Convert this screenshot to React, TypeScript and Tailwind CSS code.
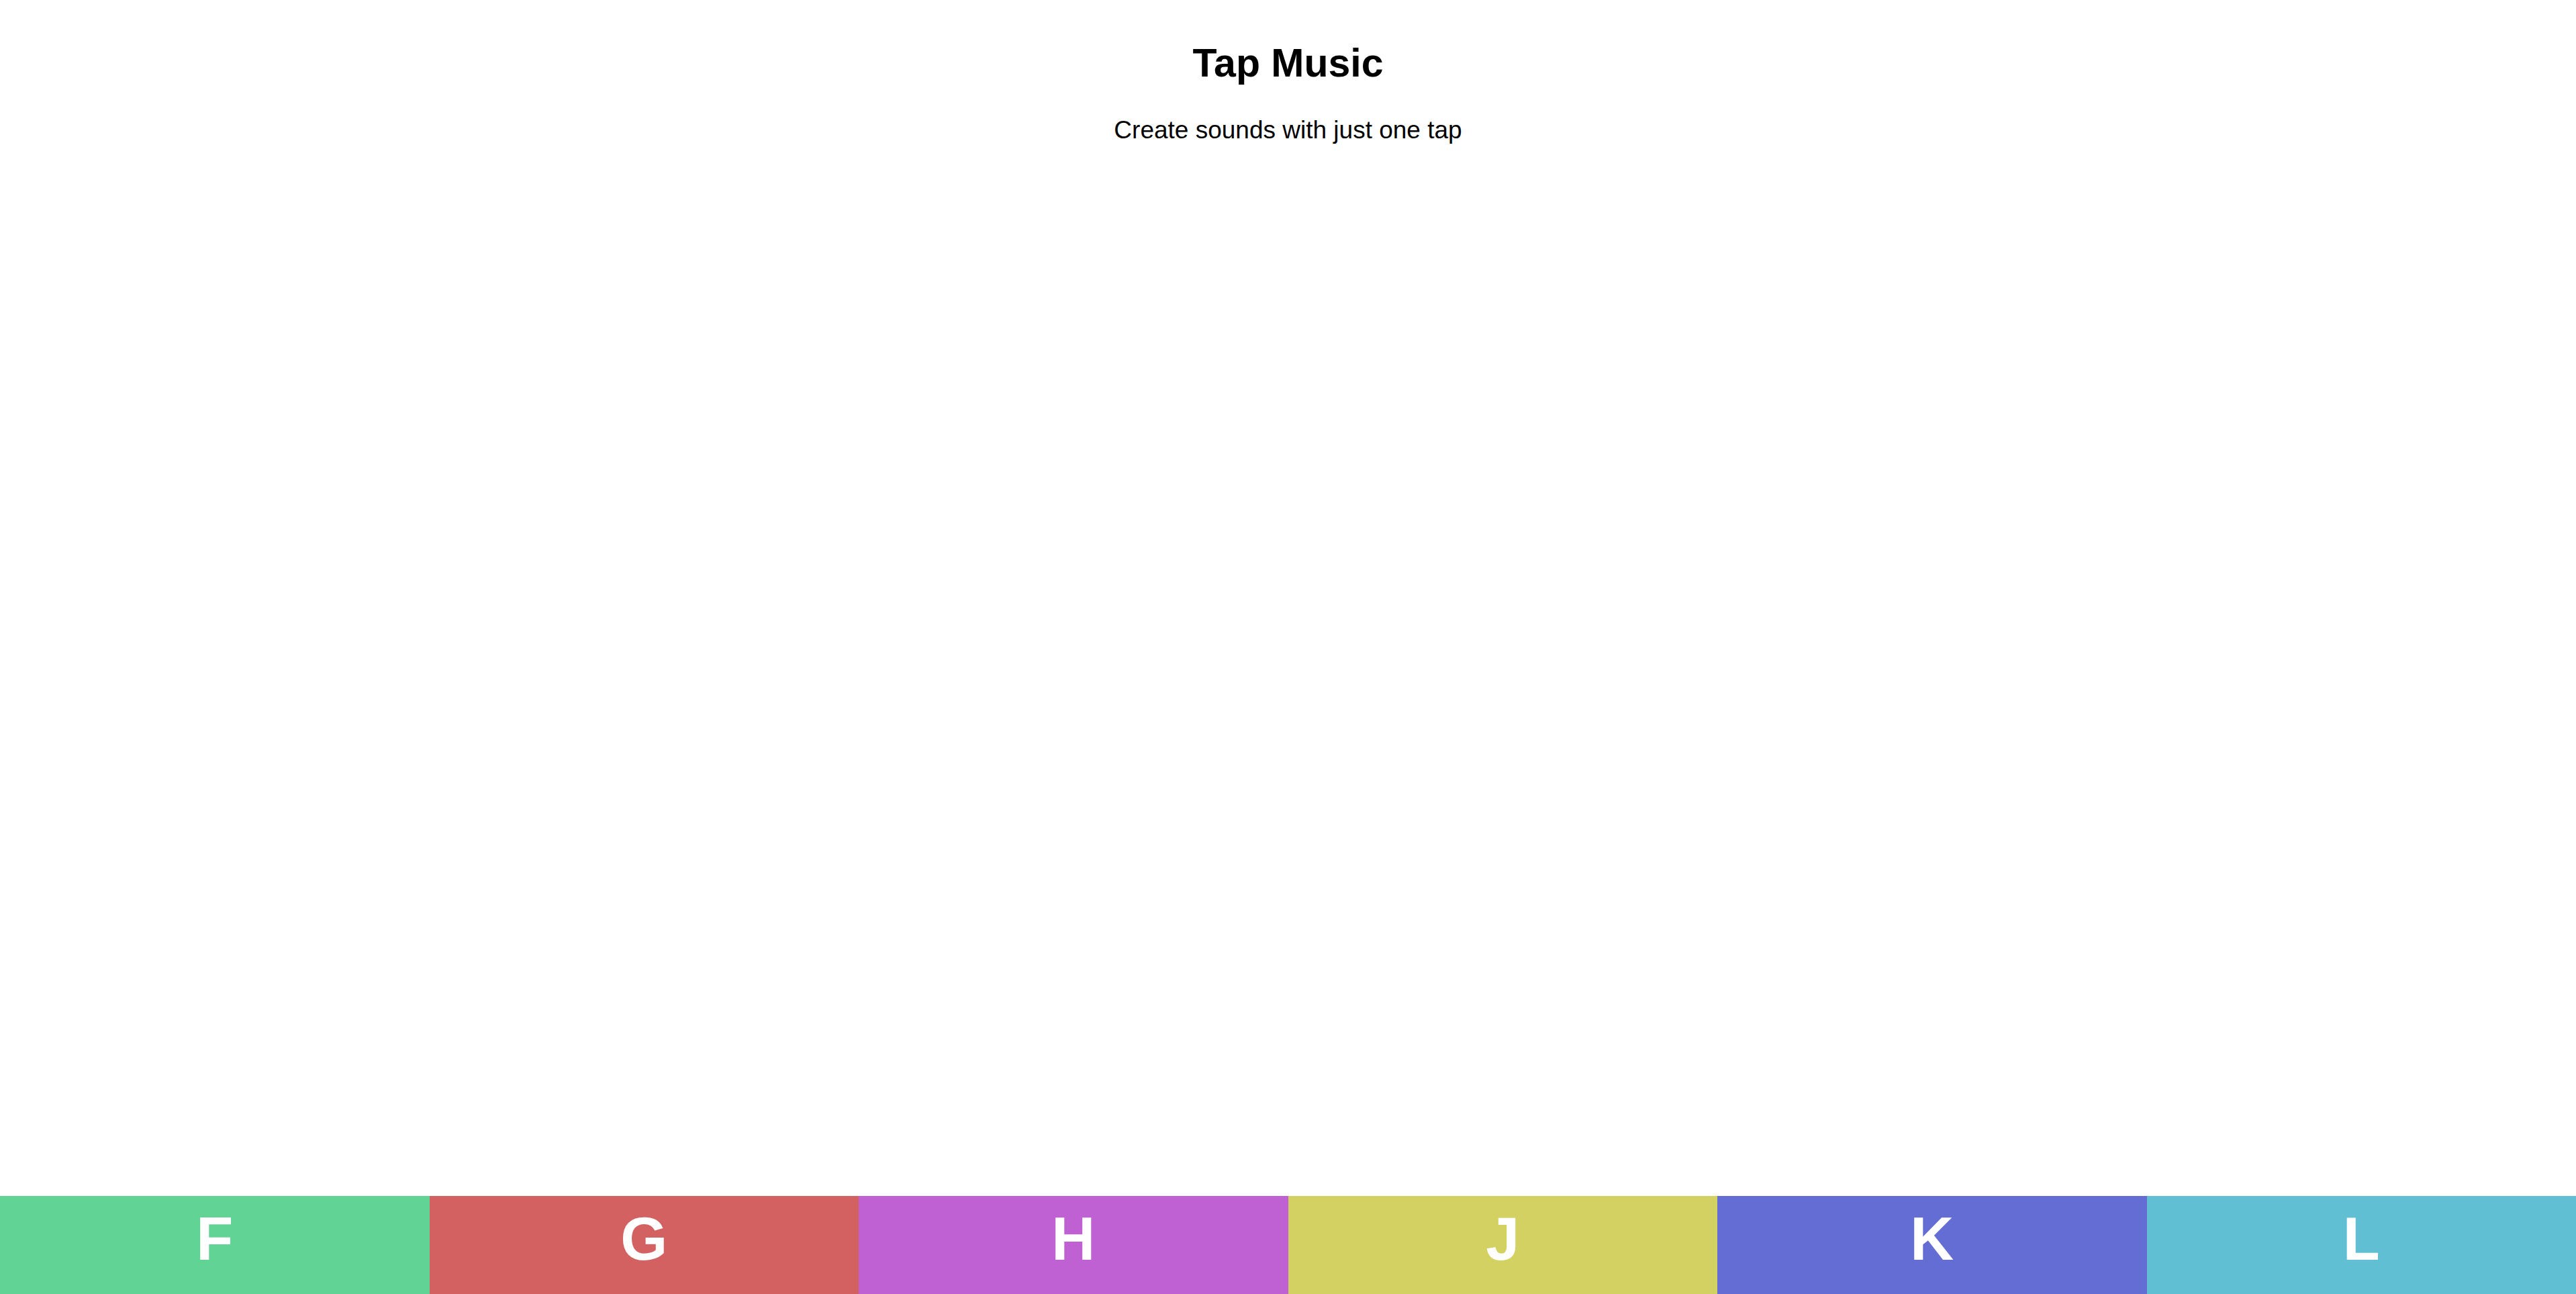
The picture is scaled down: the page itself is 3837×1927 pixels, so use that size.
const keys = [
  { key: 'F', color: 'bg-[#61d394]' },
  { key: 'G', color: 'bg-[#d36161]' },
  { key: 'H', color: 'bg-[#bf61d3]' },
  { key: 'J', color: 'bg-[#d3d161]' },
  { key: 'K', color: 'bg-[#636dd3]' },
  { key: 'L', color: 'bg-[#61bfd3]' },
];

const App = () => {
  return (
    <div className="h-screen flex flex-col justify-between bg-white text-black font-['Liberation_Sans',Arial,sans-serif] overflow-hidden">
      {/* Header */}
      <header className="text-center">
        <h1 className="mt-[65px] text-[59px] leading-none font-bold">Tap Music</h1>
        <p className="mt-[51px] text-[37px] leading-none">Create sounds with just one tap</p>
      </header>

      {/* Pads */}
      <div className="flex h-[146px]">
        {keys.map((k) => (
          <button
            key={k.key}
            className={`${k.color} flex-1 flex justify-center items-start pt-[19px] text-white text-[90px] leading-none font-bold`}
          >
            {k.key}
          </button>
        ))}
      </div>
    </div>
  );
};

export default App;
